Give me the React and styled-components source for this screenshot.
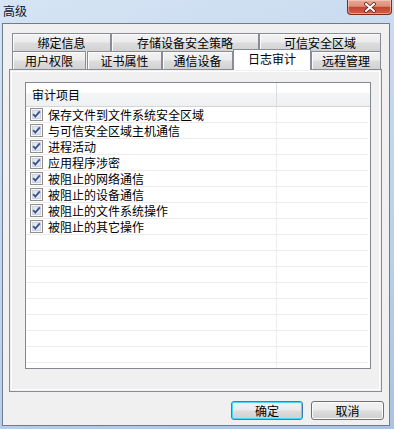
import styled, { createGlobalStyle } from "styled-components";

const items = [
  "保存文件到文件系统安全区域",
  "与可信安全区域主机通信",
  "进程活动",
  "应用程序涉密",
  "被阻止的网络通信",
  "被阻止的设备通信",
  "被阻止的文件系统操作",
  "被阻止的其它操作",
];

const topTabs = [
  { label: "绑定信息", w: 99 },
  { label: "存储设备安全策略", w: 148 },
  { label: "可信安全区域", w: 122 },
];

const bottomTabs = [
  { label: "用户权限", w: 74, ml: 0 },
  { label: "证书属性", w: 75, ml: 1 },
  { label: "通信设备", w: 71, ml: 0 },
  { label: "日志审计", w: 78, ml: 0, active: true },
  { label: "远程管理", w: 70, ml: 0 },
];

const Check = () => (
  <svg width="13" height="13" viewBox="0 0 13 13">
    <rect x="0.5" y="0.5" width="12" height="12" fill="#f6f6f6" stroke="#8e8f8f" />
    <rect x="2" y="2" width="9" height="9" fill="#cdd4df" />
    <rect x="3" y="3" width="7" height="7" fill="#e3e7ee" />
    <path d="M3.2 6.2 L5.3 8.6 L9.8 3.4" stroke="#3c5592" strokeWidth="1.9" fill="none" />
  </svg>
);

const App = () => {
  const rows = Array.from({ length: 17 }, (_, i) => items[i]);
  return (
    <Window>
      <GlobalStyle />
      <TitleBar>
        <Title>高级</Title>
        <CloseButton>
          <svg width="14" height="11" viewBox="0 0 14 11">
            <path d="M3 2 L11 9 M11 2 L3 9" stroke="#5a1a10" strokeWidth="3.6" strokeLinecap="round" />
            <path d="M3 2 L11 9 M11 2 L3 9" stroke="#ffffff" strokeWidth="2.2" strokeLinecap="round" />
          </svg>
        </CloseButton>
      </TitleBar>
      <Client>
        <TabStrip>
          <TabRow>
            {topTabs.map((t) => (
              <Tab key={t.label} $w={t.w}>
                {t.label}
              </Tab>
            ))}
          </TabRow>
          <TabRow>
            {bottomTabs.map((t) =>
              t.active ? (
                <ActiveTab key={t.label} $w={t.w}>
                  {t.label}
                </ActiveTab>
              ) : (
                <Tab key={t.label} $w={t.w} $ml={t.ml} $lower>
                  {t.label}
                </Tab>
              )
            )}
          </TabRow>
        </TabStrip>
        <Panel>
          <ListView>
            <Header>
              <HeaderCell>审计项目</HeaderCell>
              <HeaderCell />
            </Header>
            {rows.map((label, i) => (
              <Row key={i}>
                <Cell>
                  {label && (
                    <>
                      <Check />
                      <span>{label}</span>
                    </>
                  )}
                </Cell>
                <Cell $last />
              </Row>
            ))}
          </ListView>
        </Panel>
        <ButtonBar>
          <Button $w={72} $default>
            确定
          </Button>
          <Button $w={73}>取消</Button>
        </ButtonBar>
      </Client>
    </Window>
  );
};

export default App;

const GlobalStyle = createGlobalStyle`
  html, body {
    margin: 0;
    padding: 0;
    width: 394px;
    height: 429px;
    overflow: hidden;
  }
  body {
    font-family: "Noto Sans CJK SC", "Liberation Sans", sans-serif;
    font-size: 12px;
    color: #000;
  }
`;

const Window = styled.div`
  width: 394px;
  height: 429px;
  display: flex;
  flex-direction: column;
  background: linear-gradient(160deg, #d6e4f4 0%, #c6d9ef 35%, #b9cfea 70%, #a9c3e4 100%);
  overflow: hidden;
`;

const TitleBar = styled.div`
  height: 23px;
  display: flex;
  align-items: flex-start;
  flex-shrink: 0;
`;

const Title = styled.div`
  padding-left: 3px;
  line-height: 22px;
  font-size: 12px;
  color: #10102a;
`;

const CloseButton = styled.div`
  margin-left: auto;
  margin-right: 2px;
  width: 45px;
  height: 15px;
  box-sizing: border-box;
  border: 1px solid #7d2d20;
  border-top: none;
  border-radius: 0 0 4px 4px;
  background: linear-gradient(#e9a898 0%, #dc8e7a 45%, #c5452c 52%, #cf6346 100%);
  box-shadow: inset 0 0 0 1px rgba(255, 220, 210, 0.5);
  display: flex;
  align-items: center;
  justify-content: center;
`;

const Client = styled.div`
  margin: 0 4px 3px 2px;
  height: 403px;
  box-sizing: border-box;
  border: 1px solid #6f7c8e;
  background: #f0f0f0;
  padding: 9px 5px 5px 6px;
  display: flex;
  flex-direction: column;
`;

const TabStrip = styled.div`
  display: flex;
  flex-direction: column;
  padding-left: 3px;
`;

const TabRow = styled.div`
  display: flex;
  height: 18px;
  align-items: flex-start;
`;

const Tab = styled.div`
  width: ${(p) => p.$w}px;
  margin-left: ${(p) => p.$ml || 0}px;
  height: 18px;
  box-sizing: border-box;
  border: 1px solid #898c95;
  border-bottom: none;
  background: linear-gradient(#f3f3f3 0%, #ebebeb 48%, #dddddd 52%, #d2d2d2 100%);
  box-shadow: inset 1px 1px 0 #fbfbfb;
  text-align: center;
  line-height: ${(p) => (p.$lower ? 18 : 17)}px;
  white-space: nowrap;
`;

const ActiveTab = styled.div`
  width: ${(p) => p.$w}px;
  height: 21px;
  margin-top: -2px;
  box-sizing: border-box;
  border: 1px solid #898c95;
  border-bottom: none;
  background: #ffffff;
  text-align: center;
  line-height: 17px;
  position: relative;
  z-index: 1;
`;

const Panel = styled.div`
  width: 373px;
  height: 323px;
  box-sizing: border-box;
  border: 1px solid #898c95;
  box-shadow: inset 0 0 0 1px #f0f0f0, inset 0 0 0 2px #ffffff;
  padding: 12px 0 0 15px;
  flex-shrink: 0;
`;

const ListView = styled.div`
  width: 346px;
  height: 287px;
  box-sizing: border-box;
  border: 1px solid #828790;
  background: #ffffff;
  overflow: hidden;
`;

const Header = styled.div`
  display: grid;
  grid-template-columns: 251px 1fr;
  height: 24px;
  box-sizing: border-box;
  border-bottom: 1px solid #d5d5d5;
  background: linear-gradient(#ffffff 0%, #ffffff 42%, #f4f5f7 44%, #eff0f2 100%);
`;

const HeaderCell = styled.div`
  padding-left: 6px;
  line-height: 23px;
  box-sizing: border-box;
  border-right: 1px solid #dadde2;
  &:last-child {
    border-right: none;
  }
`;

const Row = styled.div`
  display: grid;
  grid-template-columns: 251px 1fr;
  height: 16px;
  box-sizing: border-box;
  border-bottom: 1px solid #ececec;
  margin-right: 2px;
`;

const Cell = styled.div`
  display: flex;
  align-items: center;
  gap: 5px;
  padding-left: 4px;
  box-sizing: border-box;
  border-right: ${(p) => (p.$last ? "none" : "1px solid #ececec")};
  white-space: nowrap;
  line-height: 15px;

  svg {
    flex-shrink: 0;
  }
`;

const ButtonBar = styled.div`
  display: flex;
  justify-content: flex-end;
  gap: 8px;
  margin-top: 9px;
`;

const Button = styled.button`
  width: ${(p) => p.$w}px;
  height: 19px;
  padding: 0;
  box-sizing: border-box;
  border: 1px solid ${(p) => (p.$default ? "#3c7fb1" : "#707070")};
  border-radius: 3px;
  background: linear-gradient(#f2f2f2 0%, #ebebeb 48%, #dddddd 52%, #cfcfcf 100%);
  box-shadow: ${(p) =>
    p.$default ? "inset 0 0 0 1px #48d8fb" : "inset 0 0 0 1px #fbfbfb"};
  font-family: "Noto Sans CJK SC", "Liberation Sans", sans-serif;
  font-size: 12px;
  color: #000;
  line-height: 17px;
`;
